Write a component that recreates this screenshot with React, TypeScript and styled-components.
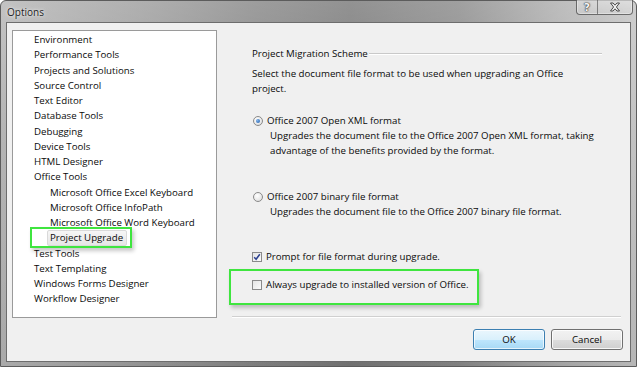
import React from "react";
import styled, { createGlobalStyle } from "styled-components";

const Global = createGlobalStyle`
  html, body { margin: 0; padding: 0; background: #ffffff; }
  body { font-family: "Open Sans", "Noto Sans", sans-serif; }
  * { box-sizing: border-box; }
`;

const Window = styled.div`
  width: 637px;
  height: 367px;
  border: 1px solid #5c5c5c;
  border-radius: 6px 6px 0 0;
  background:
    linear-gradient(180deg, rgba(255,255,255,0.2) 0%, rgba(255,255,255,0) 40%, rgba(0,0,0,0.06) 100%),
    linear-gradient(90deg, #b4b4b4 0%, #9c9c9c 22%, #858585 40%, #777777 55%, #888888 72%, #adadad 88%, #c2c2c2 100%);
  display: flex;
  flex-direction: column;
  padding: 0 5px 4px 5px;
`;

const TitleBar = styled.div`
  height: 21px;
  display: flex;
  align-items: flex-start;
`;

const Title = styled.div`
  align-self: center;
  margin-left: 1px;
  margin-top: 1px;
  font-size: 10px;
  color: #1e1e1e;
  text-shadow: 0 0 4px rgba(255,255,255,0.8), 0 0 2px rgba(255,255,255,0.6);
`;

const CaptionGroup = styled.div`
  margin-left: auto;
  margin-right: -2px;
  margin-top: -1px;
  display: flex;
  height: 15px;
  border: 1px solid rgba(70,70,70,0.75);
  border-top: none;
  border-radius: 0 0 4px 4px;
  overflow: hidden;
  box-shadow: inset 0 0 0 1px rgba(255,255,255,0.35);
  background: linear-gradient(180deg, rgba(255,255,255,0.35), rgba(255,255,255,0.12));
`;

const CaptionButton = styled.div<{ $w: number; $divider?: boolean }>`
  width: ${(p) => p.$w}px;
  height: 100%;
  display: flex;
  align-items: center;
  justify-content: center;
  border-right: ${(p) => (p.$divider ? "1px solid rgba(70,70,70,0.6)" : "none")};
  font-family: "DejaVu Sans", sans-serif;
  font-weight: bold;
  font-size: 11px;
  color: #f4f4f4;
  text-shadow: 0 0 1px #333, 0 0 1px #333, 0 0 2px #555;
`;

const Client = styled.div`
  flex: 1;
  border: 1px solid #6d6d6d;
  background: #f0f0f0;
  display: flex;
  flex-direction: column;
`;

const Main = styled.div`
  display: flex;
  padding: 7px 0 0 5px;
`;

const Tree = styled.div`
  width: 205px;
  height: 288px;
  background: #ffffff;
  border: 1px solid #9a9a9a;
  padding: 1px 0 0 21px;
  font-size: 9.7px;
  color: #0a0a0a;
`;

const TreeItem = styled.div<{ $level: number }>`
  height: 15.25px;
  line-height: 15.25px;
  padding-left: ${(p) => p.$level * 16}px;
  white-space: nowrap;
`;

const Selected = styled.span`
  position: relative;
  display: inline-block;
  height: 16px;
  line-height: 14px;
  margin-left: -3px;
  padding: 0 3px 0 2px;
  border: 1px solid #d9d9d9;
  border-radius: 2px;
  background: linear-gradient(180deg, #f6f6f6, #e6e6e6);
`;

const TreeMark = styled.span`
  position: absolute;
  left: -18px;
  top: -4px;
  width: 102px;
  height: 21px;
  border: 2px solid #3fe53f;
  box-shadow: 2px 3px 4px rgba(0,0,0,0.22);
  pointer-events: none;
`;

const Panel = styled.div`
  flex: 1;
  height: 288px;
  display: flex;
  flex-direction: column;
`;

const Content = styled.div`
  flex: 1;
  padding: 16px 28px 0 35px;
  font-size: 9.7px;
  line-height: 15px;
  color: #0a0a0a;
  display: flex;
  flex-direction: column;
`;

const GroupHeader = styled.div`
  display: flex;
  align-items: center;
  gap: 1px;
  white-space: nowrap;
  &::after {
    content: "";
    flex: 1;
    height: 1px;
    margin-top: -1px;
    background: #c9c9c9;
    box-shadow: 0 1px 0 #ffffff;
  }
`;

const Para = styled.div`
  margin-top: 5px;
`;

const OptionRow = styled.label<{ $gap: number }>`
  display: flex;
  align-items: center;
  gap: 4px;
  margin-top: ${(p) => p.$gap}px;
  white-space: nowrap;
`;

const Desc = styled.div`
  padding-left: 18px;
`;

const Radio = styled.span<{ $checked?: boolean }>`
  width: 10px;
  height: 10px;
  margin-left: 1px;
  border-radius: 50%;
  border: 1px solid #8a8a8a;
  background: radial-gradient(circle at 40% 35%, #ffffff 0%, #e8e8e8 60%, #cfcfcf 100%);
  display: flex;
  align-items: center;
  justify-content: center;
  flex-shrink: 0;
  &::after {
    content: "";
    display: ${(p) => (p.$checked ? "block" : "none")};
    width: 4px;
    height: 4px;
    border-radius: 50%;
    background: radial-gradient(circle at 35% 35%, #7fb3ea, #1f5aa8);
  }
`;

const Check = styled.span`
  width: 10px;
  height: 10px;
  border: 1px solid #8a8a8a;
  background: linear-gradient(135deg, #e4e4e4, #fafafa);
  display: flex;
  align-items: center;
  justify-content: center;
  flex-shrink: 0;
`;

const Highlight = styled.div`
  margin: 5px 0 0 -23px;
  width: 250px;
  height: 36px;
  border: 2px solid #3fe53f;
  box-shadow: 2px 3px 4px rgba(0,0,0,0.22);
  padding: 6px 0 0 21px;
`;

const Separator = styled.div`
  height: 2px;
  margin: 0 9px 0 15px;
  border-top: 1px solid #d0d0d0;
  border-bottom: 1px solid #ffffff;
`;

const Footer = styled.div`
  display: flex;
  justify-content: flex-end;
  gap: 6px;
  padding: 11px 7px 0 0;
`;

const Button = styled.div<{ $default?: boolean }>`
  width: 72px;
  height: 21px;
  display: flex;
  align-items: center;
  justify-content: center;
  font-size: 9.7px;
  color: #0a0a0a;
  border-radius: 3px;
  border: 1px solid ${(p) => (p.$default ? "#3c7fb1" : "#707070")};
  box-shadow: inset 0 0 0 1px ${(p) => (p.$default ? "rgba(255,255,255,0.7)" : "rgba(255,255,255,0.8)")};
  background: ${(p) =>
    p.$default
      ? "linear-gradient(180deg, #eaf6fd 0%, #d9f0fc 50%, #bee6fd 51%, #a7d9f5 100%)"
      : "linear-gradient(180deg, #f2f2f2 0%, #ebebeb 50%, #dddddd 51%, #cfcfcf 100%)"};
`;

const CheckMark = () => (
  <svg width="8" height="8" viewBox="0 0 8 8">
    <path d="M1.2 4.2 L3.1 6.3 L6.8 1.2" fill="none" stroke="#2a3f8f" strokeWidth="1.5" />
  </svg>
);

const CloseGlyph = () => (
  <svg width="12" height="10" viewBox="0 0 12 10">
    <path
      d="M1.5 1 L4 1 L6 3.2 L8 1 L10.5 1 L7.4 5 L10.5 9 L8 9 L6 6.8 L4 9 L1.5 9 L4.6 5 Z"
      fill="#f2f2f2"
      stroke="#3a3a3a"
      strokeWidth="0.9"
      strokeLinejoin="round"
    />
  </svg>
);

type Item = { label: string; level: number; selected?: boolean };

const items: Item[] = [
  { label: "Environment", level: 0 },
  { label: "Performance Tools", level: 0 },
  { label: "Projects and Solutions", level: 0 },
  { label: "Source Control", level: 0 },
  { label: "Text Editor", level: 0 },
  { label: "Database Tools", level: 0 },
  { label: "Debugging", level: 0 },
  { label: "Device Tools", level: 0 },
  { label: "HTML Designer", level: 0 },
  { label: "Office Tools", level: 0 },
  { label: "Microsoft Office Excel Keyboard", level: 1 },
  { label: "Microsoft Office InfoPath", level: 1 },
  { label: "Microsoft Office Word Keyboard", level: 1 },
  { label: "Project Upgrade", level: 1, selected: true },
  { label: "Test Tools", level: 0 },
  { label: "Text Templating", level: 0 },
  { label: "Windows Forms Designer", level: 0 },
  { label: "Workflow Designer", level: 0 },
];

export default function App() {
  return (
    <>
      <Global />
      <Window>
        <TitleBar>
          <Title>Options</Title>
          <CaptionGroup>
            <CaptionButton $w={21} $divider>?</CaptionButton>
            <CaptionButton $w={34}>
              <CloseGlyph />
            </CaptionButton>
          </CaptionGroup>
        </TitleBar>
        <Client>
          <Main>
            <Tree>
              {items.map((it) => (
                <TreeItem key={it.label} $level={it.level}>
                  {it.selected ? (
                    <Selected>
                      {it.label}
                      <TreeMark />
                    </Selected>
                  ) : (
                    it.label
                  )}
                </TreeItem>
              ))}
            </Tree>
            <Panel>
              <Content>
                <GroupHeader>Project Migration Scheme</GroupHeader>
                <Para>
                  Select the document file format to be used when upgrading an Office
                  <br />
                  project.
                </Para>
                <OptionRow $gap={17}>
                  <Radio $checked />
                  Office 2007 Open XML format
                </OptionRow>
                <Desc>
                  Upgrades the document file to the Office 2007 Open XML format, taking
                  <br />
                  advantage of the benefits provided by the format.
                </Desc>
                <OptionRow $gap={31}>
                  <Radio />
                  Office 2007 binary file format
                </OptionRow>
                <Desc>Upgrades the document file to the Office 2007 binary file format.</Desc>
                <OptionRow $gap={30}>
                  <Check>
                    <CheckMark />
                  </Check>
                  Prompt for file format during upgrade.
                </OptionRow>
                <Highlight>
                  <OptionRow $gap={0}>
                    <Check />
                    Always upgrade to installed version of Office.
                  </OptionRow>
                </Highlight>
              </Content>
              <Separator />
            </Panel>
          </Main>
          <Footer>
            <Button $default>OK</Button>
            <Button>Cancel</Button>
          </Footer>
        </Client>
      </Window>
    </>
  );
}
